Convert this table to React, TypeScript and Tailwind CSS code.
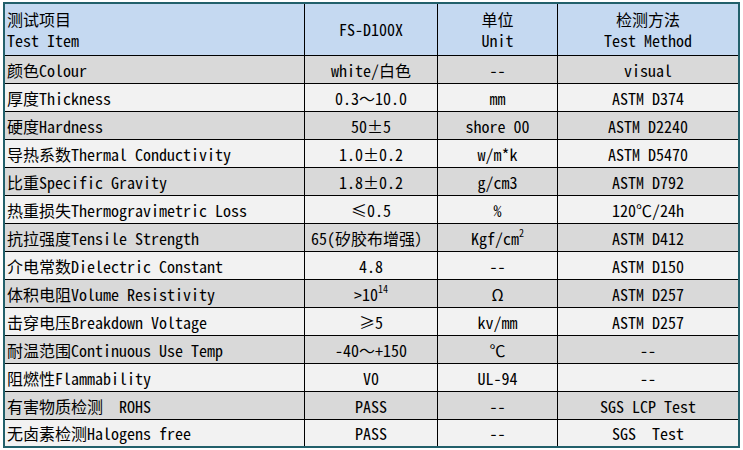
import React from "react";

const FONT = '"Noto Sans Mono CJK SC", "Noto Sans CJK SC", "DejaVu Sans Mono", monospace';

type Row = { a: React.ReactNode; b: React.ReactNode; c: React.ReactNode; d: React.ReactNode };

const rows: Row[] = [
  { a: "颜色Colour", b: "white/白色", c: "--", d: "visual" },
  { a: "厚度Thickness", b: "0.3～10.0", c: "mm", d: "ASTM D374" },
  { a: "硬度Hardness", b: "50±5", c: "shore 00", d: "ASTM D2240" },
  { a: "导热系数Thermal Conductivity", b: "1.0±0.2", c: "w/m*k", d: "ASTM D5470" },
  { a: "比重Specific Gravity", b: "1.8±0.2", c: "g/cm3", d: "ASTM D792" },
  { a: "热重损失Thermogravimetric Loss", b: "≤0.5", c: "%", d: "120℃/24h" },
  {
    a: "抗拉强度Tensile Strength",
    b: "65(矽胶布增强）",
    c: (
      <>
        Kgf/cm<sup className="text-[10px]">2</sup>
      </>
    ),
    d: "ASTM D412",
  },
  { a: "介电常数Dielectric Constant", b: "4.8", c: "--", d: "ASTM D150" },
  {
    a: "体积电阻Volume Resistivity",
    b: (
      <>
        &gt;10<sup className="text-[10px]">14</sup>
      </>
    ),
    c: "Ω",
    d: "ASTM D257",
  },
  { a: "击穿电压Breakdown Voltage", b: "≥5", c: "kv/mm", d: "ASTM D257" },
  { a: "耐温范围Continuous Use Temp", b: "-40～+150", c: "℃", d: "--" },
  { a: "阻燃性Flammability", b: "V0", c: "UL-94", d: "--" },
  { a: "有害物质检测  ROHS", b: "PASS", c: "--", d: "SGS LCP Test" },
  { a: "无卤素检测Halogens free", b: "PASS", c: "--", d: "SGS  Test" },
];

export default function App() {
  return (
    <div
      className="w-[743px] h-[450px] bg-white pt-[2px] pl-[3px] text-black text-[16px] whitespace-pre"
      style={{ fontFamily: FONT }}
    >
      <div className="w-[737px] border-2 border-[#22606b]">
        <div className="grid grid-cols-[300px_133px_120px_180px] h-[52px] border-b border-black bg-[#c5d9f1] leading-[21px]">
          <div className="border-r border-black pl-[2px] flex flex-col justify-center">
            <div>测试项目</div>
            <div>Test Item</div>
          </div>
          <div className="border-r border-black flex items-center justify-center">FS-D100X</div>
          <div className="border-r border-black flex flex-col items-center justify-center">
            <div>单位</div>
            <div>Unit</div>
          </div>
          <div className="flex flex-col items-center justify-center">
            <div>检测方法</div>
            <div>Test Method</div>
          </div>
        </div>
        {rows.map((r, i) => {
          const last = i === rows.length - 1;
          const bg = i % 2 === 0 ? "bg-[#d9d9d9]" : "bg-[#f2f2f2]";
          return (
            <div
              key={i}
              className={`grid grid-cols-[300px_133px_120px_180px] leading-[20px] ${bg} ${
                last ? "h-[26px]" : "h-[28px] border-b border-black"
              }`}
            >
              <div className="border-r border-black pl-[2px] flex items-center">{r.a}</div>
              <div className="border-r border-black flex items-center justify-center">{r.b}</div>
              <div className="border-r border-black flex items-center justify-center">{r.c}</div>
              <div className="flex items-center justify-center">{r.d}</div>
            </div>
          );
        })}
      </div>
    </div>
  );
}
